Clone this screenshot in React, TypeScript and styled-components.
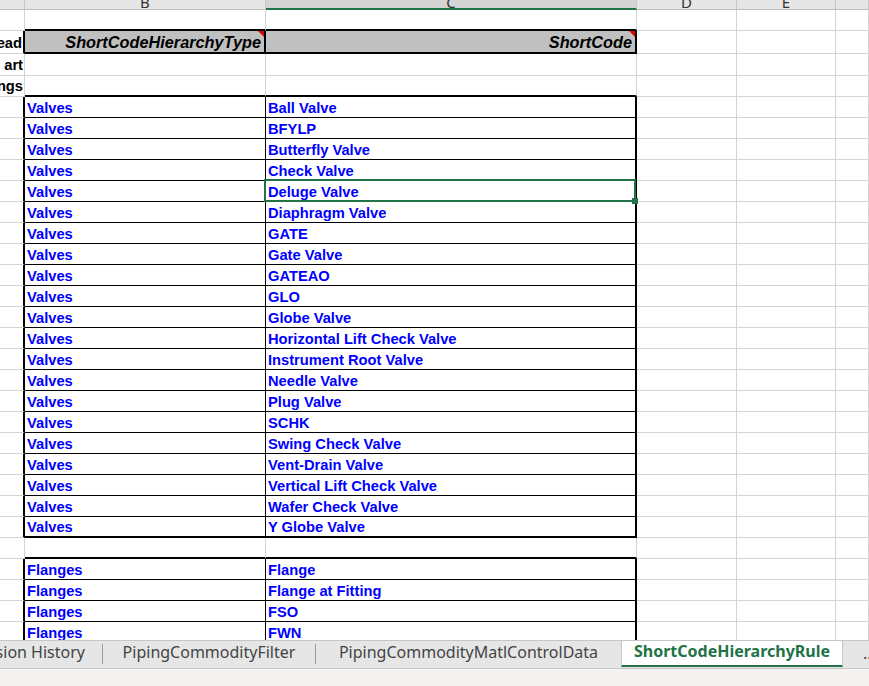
import React from "react";
import styled, { createGlobalStyle, css } from "styled-components";

type Line = "grid" | "thin" | "thick";
type Kind = "blank" | "head" | "data";

const COLS = "25px 241px 371px 100px 99px 1fr";
const GREEN = "#217346";

const edge = (l: Line) =>
  l === "grid" ? "1px solid #d4d4d4" : l === "thin" ? "1px solid #000" : "2px solid #000";

const GlobalStyle = createGlobalStyle`
  html, body {
    margin: 0;
    padding: 0;
    height: 100%;
  }
  body {
    background: #fff;
    overflow: hidden;
  }
  #root {
    height: 100%;
  }
`;

const Frame = styled.div`
  height: 100vh;
  display: flex;
  flex-direction: column;
`;

const Sheet = styled.div`
  flex: 1;
  min-height: 0;
  overflow: hidden;
  display: flex;
  flex-direction: column;
`;

const ColumnHeader = styled.div`
  display: grid;
  grid-template-columns: ${COLS};
  height: 10px;
  flex-shrink: 0;
  overflow: hidden;
`;

const ColHead = styled.div<{ $active?: boolean }>`
  display: flex;
  justify-content: center;
  align-items: flex-end;
  overflow: hidden;
  background: ${(p) => (p.$active ? "#d4d4d4" : "#e6e6e6")};
  border-right: 1px solid #c8c8c8;
  border-bottom: ${(p) => (p.$active ? `2px solid ${GREEN}` : "1px solid #bdbdbd")};
  box-sizing: border-box;
  font-family: "Noto Sans", "Liberation Sans", sans-serif;
  font-size: 15px;
  line-height: 16px;
  color: #333;
  span {
    margin-bottom: ${(p) => (p.$active ? "-2px" : "-1px")};
  }
`;

const Row = styled.div<{ $h: number }>`
  display: grid;
  grid-template-columns: ${COLS};
  height: ${(p) => p.$h}px;
  flex-shrink: 0;
`;

const Cell = styled.div<{
  $right: Line;
  $bottom: Line;
  $variant?: "label" | "head" | "data";
  $note?: boolean;
  $selected?: boolean;
}>`
  position: relative;
  box-sizing: border-box;
  display: flex;
  align-items: flex-end;
  min-width: 0;
  border-right: ${(p) => edge(p.$right)};
  border-bottom: ${(p) => edge(p.$bottom)};
  font-family: "Liberation Sans", Arial, sans-serif;
  font-weight: 700;
  line-height: 1.15;
  white-space: nowrap;

  ${(p) =>
    p.$variant === "label" &&
    css`
      justify-content: flex-end;
      overflow: hidden;
      padding: 0 1px 1px 0;
      font-size: 14.7px;
      color: #000;
      span {
        flex-shrink: 0;
      }
    `}

  ${(p) =>
    p.$variant === "head" &&
    css`
      justify-content: flex-end;
      padding: 0 3px 0 0;
      background: #c0c0c0;
      font-size: 16.3px;
      font-style: italic;
      color: #000;
    `}

  ${(p) =>
    p.$variant === "data" &&
    css`
      padding: 0 0 0 2px;
      font-size: 14.7px;
      color: #0000ff;
    `}

  ${(p) =>
    p.$note &&
    css`
      &::before {
        content: "";
        position: absolute;
        top: 0;
        right: 0;
        border-top: 6px solid #e00000;
        border-left: 6px solid transparent;
      }
    `}

  ${(p) =>
    p.$selected &&
    css`
      &::after {
        content: "";
        position: absolute;
        top: -2px;
        left: -2px;
        right: -1px;
        bottom: -1px;
        border: 2px solid ${GREEN};
        z-index: 2;
      }
    `}
`;

const CellText = styled.span`
  overflow: hidden;
`;

const FillHandle = styled.div`
  position: absolute;
  right: -3px;
  bottom: -3px;
  width: 6px;
  height: 6px;
  background: ${GREEN};
  z-index: 3;
`;

const TabBar = styled.div`
  height: 29px;
  flex-shrink: 0;
  box-sizing: border-box;
  display: flex;
  align-items: flex-start;
  background: #e6e6e6;
  border-top: 1px solid #c6c6c6;
  border-bottom: 1px solid #c6c6c6;
  overflow: hidden;
`;

const Tab = styled.div<{ $width: number; $active?: boolean; $first?: boolean }>`
  width: ${(p) => p.$width}px;
  height: 26px;
  flex-shrink: 0;
  box-sizing: border-box;
  display: flex;
  align-items: center;
  justify-content: ${(p) => (p.$first ? "flex-end" : "center")};
  padding: 0 ${(p) => (p.$first ? "17px" : "0")} 5px 0;
  font-family: "Noto Sans", "Open Sans", sans-serif;
  font-size: 16px;
  color: #444;
  white-space: nowrap;
  overflow: hidden;
  ${(p) =>
    p.$active &&
    css`
      margin-top: -1px;
      height: 27px;
      padding: 0 0 4px;
      background: #fff;
      color: ${GREEN};
      font-weight: 700;
      border-left: 1px solid #c6c6c6;
      border-right: 1px solid #c6c6c6;
      border-bottom: 2px solid ${GREEN};
    `}
`;

const TabSeparator = styled.div`
  width: 1px;
  height: 20px;
  margin-top: 3px;
  background: #9a9a9a;
  flex-shrink: 0;
`;

const TabMore = styled.div`
  padding: 1px 0 0 20px;
  font-family: "Noto Sans", sans-serif;
  font-size: 16px;
  color: #444;
  white-space: nowrap;
`;

const StatusStrip = styled.div`
  height: 17px;
  flex-shrink: 0;
  background: #f3f2f1;
`;

interface SheetRow {
  h: number;
  kind: Kind;
  label?: string;
  b?: string;
  c?: string;
  selected?: boolean;
}

const valveCodes = [
  "Ball Valve",
  "BFYLP",
  "Butterfly Valve",
  "Check Valve",
  "Deluge Valve",
  "Diaphragm Valve",
  "GATE",
  "Gate Valve",
  "GATEAO",
  "GLO",
  "Globe Valve",
  "Horizontal Lift Check Valve",
  "Instrument Root Valve",
  "Needle Valve",
  "Plug Valve",
  "SCHK",
  "Swing Check Valve",
  "Vent-Drain Valve",
  "Vertical Lift Check Valve",
  "Wafer Check Valve",
  "Y Globe Valve",
];

const flangeCodes = ["Flange", "Flange at Fitting", "FSO", "FWN"];

const rows: SheetRow[] = [
  { h: 21, kind: "blank" },
  { h: 23, kind: "head", label: "ead", b: "ShortCodeHierarchyType", c: "ShortCode" },
  { h: 22, kind: "blank", label: "art" },
  { h: 21, kind: "blank", label: "ngs" },
  ...valveCodes.map((c) => ({
    h: 21,
    kind: "data" as Kind,
    b: "Valves",
    c,
    selected: c === "Deluge Valve",
  })),
  { h: 21, kind: "blank" },
  ...flangeCodes.map((c) => ({ h: 21, kind: "data" as Kind, b: "Flanges", c })),
];

const columns = [
  { name: "", active: false },
  { name: "B", active: false },
  { name: "C", active: true },
  { name: "D", active: false },
  { name: "E", active: false },
  { name: "", active: false },
];

const tabs = [
  { name: "sion History", width: 102 },
  { name: "PipingCommodityFilter", width: 212 },
  { name: "PipingCommodityMatlControlData", width: 305 },
];

const App: React.FC = () => {
  return (
    <Frame>
      <GlobalStyle />
      <Sheet>
        <ColumnHeader>
          {columns.map((col, i) => (
            <ColHead key={i} $active={col.active}>
              <span>{col.name}</span>
            </ColHead>
          ))}
        </ColumnHeader>
        {rows.map((row, i) => {
          const next = rows[i + 1];
          const inTable = row.kind !== "blank";
          // bottom edge of the B/C cells
          let bottom: Line = "grid";
          if (row.kind === "head") bottom = "thick";
          else if (row.kind === "data") bottom = next && next.kind !== "data" ? "thick" : "thin";
          else if (next && next.kind !== "blank") bottom = "thick";
          const variant = row.kind === "head" ? "head" : "data";
          return (
            <Row key={i} $h={row.h}>
              <Cell $right={inTable ? "thick" : "grid"} $bottom="grid" $variant="label">
                {row.label && <CellText>{row.label}</CellText>}
              </Cell>
              <Cell
                $right={row.kind === "head" ? "thick" : inTable ? "thin" : "grid"}
                $bottom={bottom}
                $variant={inTable ? variant : undefined}
                $note={row.kind === "head"}
              >
                {row.b && <CellText>{row.b}</CellText>}
              </Cell>
              <Cell
                $right={inTable ? "thick" : "grid"}
                $bottom={bottom}
                $variant={inTable ? variant : undefined}
                $note={row.kind === "head"}
                $selected={row.selected}
              >
                {row.c && <CellText>{row.c}</CellText>}
                {row.selected && <FillHandle />}
              </Cell>
              <Cell $right="grid" $bottom="grid" />
              <Cell $right="grid" $bottom="grid" />
              <Cell $right="grid" $bottom="grid" />
            </Row>
          );
        })}
      </Sheet>
      <TabBar>
        {tabs.map((t, i) => (
          <React.Fragment key={t.name}>
            <Tab $width={t.width} $first={i === 0}>
              {t.name}
            </Tab>
            {i < tabs.length - 1 && <TabSeparator />}
          </React.Fragment>
        ))}
        <Tab $width={222} $active>
          ShortCodeHierarchyRule
        </Tab>
        <TabMore>...</TabMore>
      </TabBar>
      <StatusStrip />
    </Frame>
  );
};

export default App;
